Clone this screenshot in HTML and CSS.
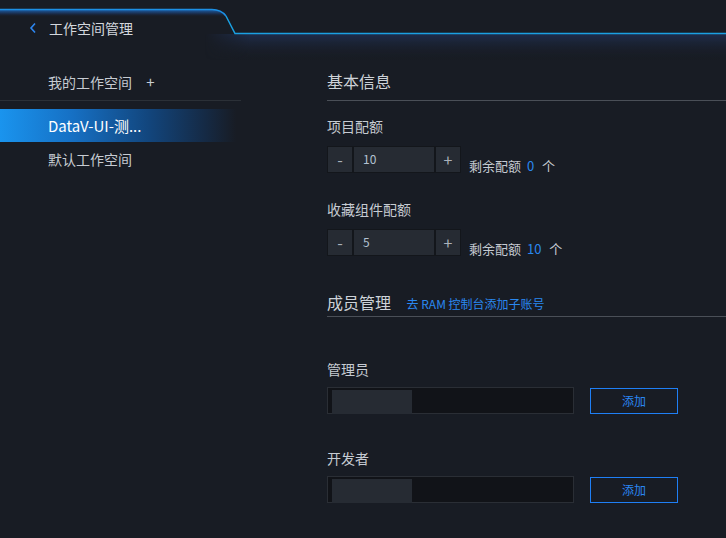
FILE: index.html
```html
<!DOCTYPE html>
<html lang="zh-CN">
<head>
    <meta charset="UTF-8">
    <title>工作空间管理</title>
    <link rel="stylesheet" href="styles.css">
</head>
<body>

    <header class="topbar">
        <!-- tab outline and glow -->
        <svg class="topbar-bg" width="726" height="64" viewBox="0 0 726 64">
            <defs>
                <linearGradient id="tabFill" gradientUnits="userSpaceOnUse" x1="0" y1="10" x2="0" y2="17">
                    <stop offset="0" stop-color="#1c5aa0"/>
                    <stop offset="0.5" stop-color="#1a2f50"/>
                    <stop offset="1" stop-color="#181c24" stop-opacity="0"/>
                </linearGradient>
                <linearGradient id="glow" gradientUnits="userSpaceOnUse" x1="0" y1="34" x2="0" y2="60">
                    <stop offset="0" stop-color="#1f2d4c"/>
                    <stop offset="1" stop-color="#181c24" stop-opacity="0"/>
                </linearGradient>
                <linearGradient id="glowFade" gradientUnits="userSpaceOnUse" x1="205" y1="0" x2="250" y2="0">
                    <stop offset="0" stop-color="#000"/>
                    <stop offset="1" stop-color="#fff"/>
                </linearGradient>
                <mask id="glowMask">
                    <rect x="0" y="0" width="726" height="64" fill="url(#glowFade)"/>
                </mask>
            </defs>
            <path d="M0 9.5 H212 C219 9.5 223 12 226 16 L235 33.5 H726 V64 H0 Z" fill="url(#tabFill)"/>
            <rect x="205" y="34" width="521" height="28" fill="url(#glow)" mask="url(#glowMask)"/>
            <path d="M0 9.5 H212 C219 9.5 223 12 226 16" stroke="#1c8fe4" stroke-width="1.5" fill="none"/>
            <path d="M226 16 L235 33.5 H726" stroke="#1ba0e2" stroke-width="1.5" fill="none"/>
        </svg>
        <div class="title">
            <svg class="back" width="8" height="12" viewBox="0 0 8 12">
                <path d="M6 1.5 L2 6 L6 10.5" stroke="#2d86f0" stroke-width="1.6" fill="none"/>
            </svg>
            <span>工作空间管理</span>
        </div>
    </header>

    <div class="layout">
        <aside class="sidebar">
            <div class="sidebar-head">我的工作空间 <span class="add">+</span></div>
            <ul class="space-list">
                <li class="space active">DataV-UI-测...</li>
                <li class="space">默认工作空间</li>
            </ul>
        </aside>

        <main class="content">
            <h2 class="section-title">基本信息</h2>

            <div class="field quota-first">
                <div class="label">项目配额</div>
                <div class="quota-row">
                    <div class="stepper">
                        <span class="step-btn">-</span>
                        <span class="step-value">10</span>
                        <span class="step-btn">+</span>
                    </div>
                    <div class="remain">剩余配额 <b>0</b> 个</div>
                </div>
            </div>

            <div class="field quota-second">
                <div class="label">收藏组件配额</div>
                <div class="quota-row">
                    <div class="stepper">
                        <span class="step-btn">-</span>
                        <span class="step-value">5</span>
                        <span class="step-btn">+</span>
                    </div>
                    <div class="remain">剩余配额 <b>10</b> 个</div>
                </div>
            </div>

            <h2 class="section-title members">成员管理 <a class="ram-link" href="#">去 RAM 控制台添加子账号</a></h2>

            <div class="field member-first">
                <div class="label">管理员</div>
                <div class="member-row">
                    <div class="member-input"><span class="chip"></span></div>
                    <button class="add-btn" type="button">添加</button>
                </div>
            </div>

            <div class="field member-second">
                <div class="label">开发者</div>
                <div class="member-row">
                    <div class="member-input"><span class="chip"></span></div>
                    <button class="add-btn" type="button">添加</button>
                </div>
            </div>
        </main>
    </div>

</body>
</html>
```

FILE: styles.css
```css
/* Dark console theme */
body {
    margin: 0;
    width: 726px;
    height: 538px;
    overflow: hidden;
    background-color: #181c24;
    color: #c6cbd2;
    font-family: "Noto Sans CJK SC", "Noto Sans", sans-serif;
}

/* Top bar */
.topbar {
    position: relative;
    height: 64px;
}

.topbar-bg {
    position: absolute;
    top: 0;
    left: 0;
}

.title {
    position: relative;
    display: flex;
    align-items: center;
    padding: 19px 0 0 29px;
    height: 18px;
    font-size: 14px;
    line-height: 18px;
    color: #d3d7dd;
}

.back {
    margin-right: 12px;
}

/* Layout */
.layout {
    display: grid;
    grid-template-columns: 241px 1fr;
}

/* Sidebar */
.sidebar-head {
    height: 36px;
    line-height: 35px;
    padding-left: 48px;
    font-size: 14px;
    border-bottom: 1px solid #2b3037;
}

.add {
    margin-left: 11px;
    font-size: 15px;
    color: #c9ced4;
}

.space-list {
    list-style-type: none;
    margin: 8px 0 0 0;
    padding: 0;
}

.space {
    height: 34px;
    line-height: 34px;
    padding-left: 48px;
    font-size: 14px;
}

.space.active {
    height: 33px;
    line-height: 33px;
    font-size: 15px;
    color: #ffffff;
    background: linear-gradient(90deg, #1a94ee 0%, #1670c4 30%, #12457c 62%, #152a45 85%, rgba(24, 28, 36, 0) 98%);
}

/* Content */
.content {
    padding-left: 86px;
}

.section-title {
    margin: 0;
    height: 36px;
    line-height: 35px;
    font-size: 16px;
    font-weight: normal;
    color: #cdd2d8;
    border-bottom: 1px solid #4a4f57;
}

.section-title.members {
    height: 26px;
    line-height: 25px;
    margin-top: 34px;
}

.ram-link {
    margin-left: 12px;
    font-size: 12px;
    color: #2a88f0;
    text-decoration: none;
}

.label {
    height: 20px;
    line-height: 18px;
    font-size: 14px;
    color: #c6cbd2;
}

.quota-first {
    margin-top: 16px;
}

.quota-second {
    margin-top: 27px;
}

.quota-row {
    display: flex;
    align-items: flex-end;
    margin-top: 9px;
}

.stepper {
    display: flex;
    height: 27px;
}

.step-btn,
.step-value {
    box-sizing: border-box;
    height: 27px;
    line-height: 24px;
    background-color: #262b33;
    border: 1px solid #13161b;
    font-size: 13px;
}

.step-btn {
    width: 26px;
    text-align: center;
    font-size: 16px;
    color: #aab1ba;
}

.step-value {
    width: 82px;
    padding-left: 9px;
    color: #b3c2d2;
    font-size: 12px;
}

.remain {
    margin-left: 8px;
    height: 14px;
    line-height: 14px;
    font-size: 13px;
    color: #c6cbd2;
}

.remain b {
    font-weight: normal;
    color: #2a88f0;
    margin: 0 5px 0 3px;
}

.member-first {
    margin-top: 43px;
}

.member-second {
    margin-top: 35px;
}

.member-row {
    display: flex;
    align-items: flex-start;
    margin-top: 7px;
}

.member-input {
    box-sizing: border-box;
    width: 247px;
    height: 27px;
    padding: 1px 4px;
    background-color: #111318;
    border: 1px solid #2a2e35;
}

.chip {
    display: block;
    width: 80px;
    height: 24px;
    margin-top: 1px;
    background-color: #262b33;
}

.add-btn {
    box-sizing: border-box;
    width: 88px;
    height: 26px;
    margin: 1px 0 0 16px;
    padding: 0 0 2px 0;
    background: transparent;
    border: 1px solid #1f7ff5;
    color: #2a86f2;
    font-family: inherit;
    font-size: 12px;
    cursor: pointer;
}
```
